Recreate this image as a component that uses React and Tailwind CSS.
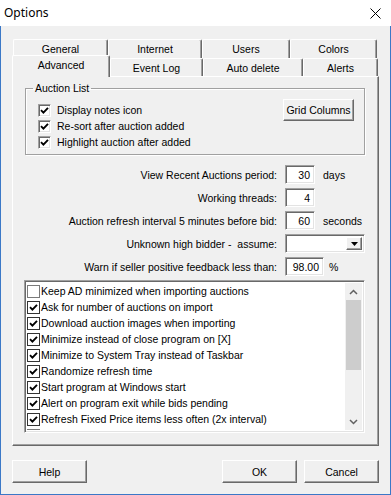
import React from 'react';

// classic 3D edges
const raised =
  'border border-t-white border-l-white border-r-[#696969] border-b-[#696969] shadow-[inset_-1px_-1px_0_#a0a0a0] bg-[#f0f0f0]';
const sunken =
  'border border-t-[#a0a0a0] border-l-[#a0a0a0] border-r-white border-b-white shadow-[inset_1px_1px_0_#696969,inset_-1px_-1px_0_#e3e3e3] bg-white';

const Check = () => (
  <svg width="9" height="9" viewBox="0 0 9 9" className="block">
    <path d="M1 4.2 L3.4 6.6 L8 1.8" fill="none" stroke="#000" strokeWidth="1.9" />
  </svg>
);

const GroupCheck = ({ label }) => (
  <div className="flex h-[16px] items-center gap-[6px]">
    <span className={`flex h-[13px] w-[13px] items-center justify-center ${sunken}`}>
      <Check />
    </span>
    <span>{label}</span>
  </div>
);

const ListItem = ({ label, checked = true }) => (
  <div className="flex h-[16px] shrink-0 items-center whitespace-nowrap">
    <span
      className={`flex h-[13px] w-[13px] shrink-0 items-center justify-center border bg-white ${
        checked ? 'border-[#333333]' : 'border-[#7a7a7a]'
      }`}
    >
      {checked && <Check />}
    </span>
    <span className="pl-px">{label}</span>
  </div>
);

const Tab = ({ children, className }) => (
  <div
    className={`flex items-center justify-center rounded-t-[2px] border-l border-t border-r border-white border-r-[#696969] bg-[#f0f0f0] shadow-[inset_-1px_0_0_#a0a0a0] ${className}`}
  >
    {children}
  </div>
);

const FormRow = ({ label, children }) => (
  <div className="flex h-[19px] items-center">
    <div className="w-[264px] whitespace-pre text-right">{label}</div>
    <div className="ml-[8px] flex items-center">{children}</div>
  </div>
);

const Chevron = ({ up }) => (
  <svg width="9" height="6" viewBox="0 0 9 6" className="block">
    <path
      d={up ? 'M1 5 L4.5 1.5 L8 5' : 'M1 1 L4.5 4.5 L8 1'}
      fill="none"
      stroke="#606060"
      strokeWidth="1.5"
    />
  </svg>
);

const listItems = [
  ['Keep AD minimized when importing auctions', false],
  ['Ask for number of auctions on import', true],
  ['Download auction images when importing', true],
  ['Minimize instead of close program on [X]', true],
  ['Minimize to System Tray instead of Taskbar', true],
  ['Randomize refresh time', true],
  ['Start program at Windows start', true],
  ['Alert on program exit while bids pending', true],
  ['Refresh Fixed Price items less often (2x interval)', true],
  ['Confirm sending snipe bids before submit', false],
];

export default function App() {
  return (
    <div className="flex h-[495px] w-[391px] flex-col bg-[#f0f0f0] font-['Liberation_Sans',Arial,sans-serif] text-[10.5px] leading-[12px] text-black">
      {/* title bar */}
      <div className="flex h-[26px] shrink-0 items-center justify-between bg-white pl-[4px] pr-[10px]">
        <span className="font-['Noto_Sans',sans-serif] text-[12px]">Options</span>
        <svg width="11" height="11" viewBox="0 0 11 11" className="block">
          <path d="M0.5 0.5 L10.5 10.5 M10.5 0.5 L0.5 10.5" stroke="#000" strokeWidth="1" />
        </svg>
      </div>

      <div className="flex flex-1 flex-col border-x border-b border-[#3b78c7] pl-[11px] pt-[13px]">
        {/* tabs */}
        <div className="flex flex-col">
          <div className="ml-px flex h-[19px]">
            <Tab className="w-[95px]">General</Tab>
            <Tab className="w-[94px]">Internet</Tab>
            <Tab className="w-[88px]">Users</Tab>
            <Tab className="w-[87px]">Colors</Tab>
          </div>
          <div className="flex h-[18px] items-end">
            <Tab className="relative z-10 -mb-px h-[22px] w-[98px] pb-[3px]">Advanced</Tab>
            <Tab className="h-[18px] w-[93px]">Event Log</Tab>
            <Tab className="h-[18px] w-[100px]">Auto delete</Tab>
            <Tab className="h-[18px] w-[75px]">Alerts</Tab>
          </div>
        </div>

        {/* panel */}
        <div className="flex h-[370px] w-[367px] flex-col border border-white border-r-[#696969] border-b-[#696969] shadow-[inset_-1px_-1px_0_#a0a0a0]">
          <fieldset className="ml-[12px] mt-[5px] w-[340px] border border-[#a0a0a0] pb-[4px] shadow-[1px_1px_0_#fff,inset_1px_1px_0_#fff]">
            <legend className="ml-[7px] px-[2px] leading-[12px]">Auction List</legend>
            <div className="flex items-start justify-between">
              <div className="flex flex-col pl-[12px] pt-[8px]">
                <GroupCheck label="Display notes icon" />
                <GroupCheck label="Re-sort after auction added" />
                <GroupCheck label="Highlight auction after added" />
              </div>
              <button className={`mr-[10px] mt-[5px] h-[22px] w-[71px] ${raised}`}>Grid Columns</button>
            </div>
          </fieldset>

          <div className="mt-[10px] flex flex-col gap-[4px]">
            <FormRow label="View Recent Auctions period:">
              <div className={`flex h-[19px] w-[30px] items-center justify-end pr-[4px] ${sunken}`}>30</div>
              <span className="ml-[8px]">days</span>
            </FormRow>
            <FormRow label="Working threads:">
              <div className={`flex h-[19px] w-[30px] items-center justify-end pr-[4px] ${sunken}`}>4</div>
            </FormRow>
            <FormRow label="Auction refresh interval 5 minutes before bid:">
              <div className={`flex h-[19px] w-[30px] items-center justify-end pr-[4px] ${sunken}`}>60</div>
              <span className="ml-[8px]">seconds</span>
            </FormRow>
            <FormRow label="Unknown high bidder -  assume:">
              <div className={`flex h-[19px] w-[80px] items-stretch justify-end p-[2px] ${sunken}`}>
                <div className={`flex w-[16px] items-center justify-center ${raised}`}>
                  <svg width="7" height="4" viewBox="0 0 7 4" className="block">
                    <path d="M0 0 H7 L3.5 4 Z" fill="#000" />
                  </svg>
                </div>
              </div>
            </FormRow>
            <FormRow label="Warn if seller positive feedback less than:">
              <div className={`flex h-[19px] w-[39px] items-center justify-end pr-[4px] ${sunken}`}>98.00</div>
              <span className="ml-[5px]">%</span>
            </FormRow>
          </div>

          <div className={`ml-[11px] mt-[4px] flex h-[153px] w-[341px] p-[2px] ${sunken}`}>
            <div className="flex min-w-0 flex-1 flex-col overflow-hidden">
              {listItems.map(([label, checked]) => (
                <ListItem key={label} label={label} checked={checked} />
              ))}
            </div>
            <div className="flex w-[17px] flex-col bg-[#f0f0f0]">
              <div className="flex h-[17px] items-center justify-center">
                <Chevron up />
              </div>
              <div className="flex-1">
                <div className="mx-[1px] h-[70px] bg-[#cdcdcd]" />
              </div>
              <div className="flex h-[17px] items-center justify-center">
                <Chevron />
              </div>
            </div>
          </div>
        </div>

        {/* dialog buttons */}
        <div className="mt-[14px] flex w-[367px]">
          <button className={`h-[23px] w-[75px] ${raised}`}>Help</button>
          <button className={`ml-auto h-[23px] w-[75px] ${raised}`}>OK</button>
          <button className={`ml-[7px] h-[23px] w-[75px] ${raised}`}>Cancel</button>
        </div>
      </div>
    </div>
  );
}
